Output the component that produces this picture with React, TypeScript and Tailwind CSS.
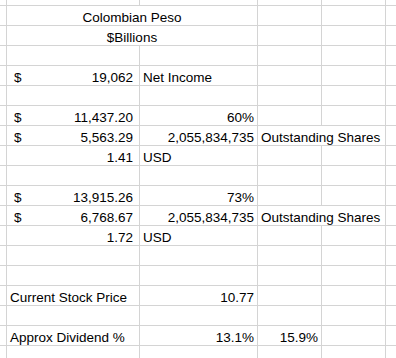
type Cell = {
  text?: string;
  align?: "left" | "right" | "center";
  span?: number;
  dollar?: boolean;
  acct?: boolean;
};

const EMPTY: Cell[] = [{}, {}, {}, {}, {}];

// Rows of the sheet, columns A to E
const rows: Cell[][] = [
  [{ text: "Colombian Peso", align: "center", span: 2 }, {}, {}, {}],
  [{ text: "$Billions", align: "center", span: 2 }, {}, {}, {}],
  EMPTY,
  [{ text: "19,062", dollar: true }, { text: "Net Income" }, {}, {}, {}],
  EMPTY,
  [{ text: "11,437.20", dollar: true }, { text: "60%", align: "right" }, {}, {}, {}],
  [
    { text: "5,563.29", dollar: true },
    { text: "2,055,834,735", align: "right" },
    { text: "Outstanding Shares", span: 2 },
    {},
  ],
  [{ text: "1.41", acct: true }, { text: "USD" }, {}, {}, {}],
  EMPTY,
  [{ text: "13,915.26", dollar: true }, { text: "73%", align: "right" }, {}, {}, {}],
  [
    { text: "6,768.67", dollar: true },
    { text: "2,055,834,735", align: "right" },
    { text: "Outstanding Shares", span: 2 },
    {},
  ],
  [{ text: "1.72", acct: true }, { text: "USD" }, {}, {}, {}],
  EMPTY,
  EMPTY,
  [{ text: "Current Stock Price" }, { text: "10.77", align: "right" }, {}, {}, {}],
  EMPTY,
  [
    { text: "Approx Dividend %" },
    { text: "13.1%", align: "right" },
    { text: "15.9%", align: "right" },
    {},
    {},
  ],
];

function SheetCell({ cell, last, bottom }: { cell: Cell; last: boolean; bottom: boolean }) {
  const border = `${last ? "" : "border-r"} ${bottom ? "" : "border-b"} border-[#d4d4d4]`;
  const span = cell.span === 2 ? "col-span-2" : "";

  if (cell.dollar) {
    return (
      <div className={`flex items-end justify-between overflow-hidden pl-[7px] pr-[6px] ${border}`}>
        <span className="leading-[14px]">$</span>
        <span className="leading-[14px]">{cell.text}</span>
      </div>
    );
  }

  const justify =
    cell.align === "right"
      ? "justify-end pr-[3px]"
      : cell.align === "center"
        ? "justify-center"
        : "justify-start pl-[3px]";

  return (
    <div
      className={`flex items-end whitespace-nowrap ${cell.acct ? "justify-end pr-[6px]" : justify} ${span} ${border}`}
    >
      {cell.text && <span className="leading-[14px]">{cell.text}</span>}
    </div>
  );
}

export default function App() {
  return (
    <div
      className="grid h-[358px] w-[396px] overflow-hidden bg-white text-[13.5px] text-black"
      style={{ fontFamily: '"Liberation Sans", Arial, sans-serif' }}
    >
      <div className="grid grid-cols-[7px_133px_118px_64px_64px_1fr] grid-rows-[6px_repeat(17,20px)_1fr]">
        {/* partial top row */}
        {[0, 1, 2, 3, 4, 5].map((i) => (
          <div className={`border-b border-[#d4d4d4] ${i < 5 ? "border-r" : ""}`} key={`t${i}`} />
        ))}
        {rows.map((row, r) => [
          <div className="border-r border-b border-[#d4d4d4]" key={`l${r}`} />,
          ...row.map((cell, c) => (
            <SheetCell
              bottom={false}
              cell={cell}
              key={`${r}-${c}`}
              last={c === row.length - 1}
            />
          )),
        ])}
        {/* partial bottom row */}
        {[0, 1, 2, 3, 4, 5].map((i) => (
          <div className={`border-[#d4d4d4] ${i < 5 ? "border-r" : ""}`} key={`b${i}`} />
        ))}
      </div>
    </div>
  );
}
